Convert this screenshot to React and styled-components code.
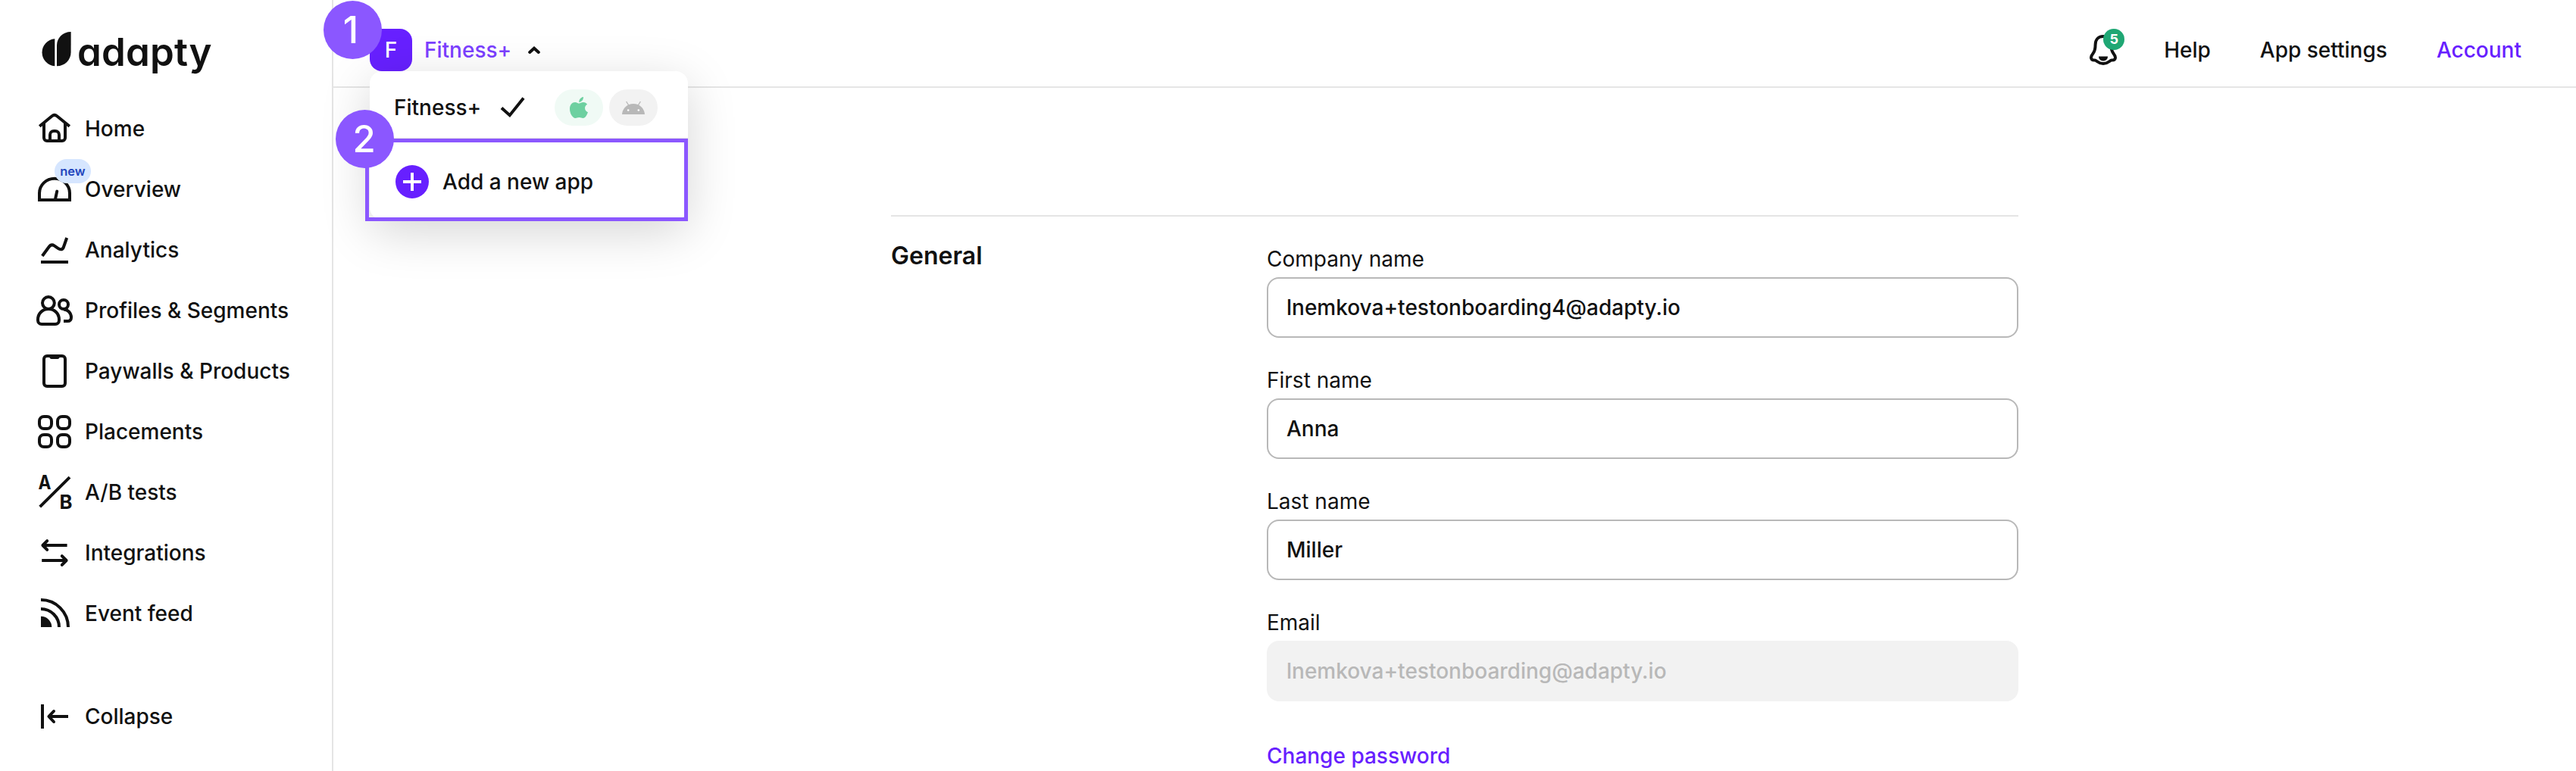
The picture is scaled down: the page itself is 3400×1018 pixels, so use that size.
import React from "react";
import styled, { createGlobalStyle } from "styled-components";

const GlobalStyle = createGlobalStyle`
  *, *::before, *::after { box-sizing: border-box; }
  html, body { margin: 0; padding: 0; background: #fff; }
  body { font-family: Inter, "Liberation Sans", sans-serif; font-size: 28px; line-height: 40px; color: #111; overflow: hidden; }
`;

const Page = styled.div`
  position: relative;
  display: flex;
  width: 3400px;
  height: 1018px;
  overflow: hidden;
`;

const Sidebar = styled.aside`
  width: 440px;
  flex: none;
  display: flex;
  flex-direction: column;
  border-right: 2px solid #e5e5e5;
`;

const Logo = styled.div`
  display: flex;
  align-items: flex-start;
  height: 130px;
  padding: 42px 0 0 54px;
`;

const LogoMark = styled.svg`
  width: 40px;
  height: 46px;
  flex: none;
`;

const LogoText = styled.span`
  margin: -1px 0 0 8px;
  font-size: 51px;
  line-height: 56px;
  font-weight: 600;
  letter-spacing: 0.2px;
  font-feature-settings: "cv11";
`;

const Nav = styled.nav`
  display: flex;
  flex-direction: column;
`;

const NavItem = styled.a`
  display: flex;
  align-items: center;
  gap: 16px;
  height: 80px;
  padding-left: 48px;
  font-weight: 500;
`;

const CollapseItem = styled(NavItem)`
  margin-top: 56px;
`;

const IconBox = styled.span`
  position: relative;
  display: flex;
  width: 48px;
  height: 48px;
`;

const Glyph = styled.svg`
  width: 48px;
  height: 48px;
  fill: none;
  stroke: #111;
  stroke-width: 4;
  overflow: visible;
`;

const GlyphLetter = styled.text`
  font-family: Inter, sans-serif;
  font-weight: 700;
  font-size: 26px;
  fill: #111;
  stroke: none;
`;

const NewBadge = styled.span`
  position: absolute;
  left: 24px;
  top: -16px;
  width: 48px;
  height: 32px;
  border-radius: 16px;
  background: #d6e6ff;
  color: #2346bd;
  font-size: 16.5px;
  line-height: 33px;
  font-weight: 600;
  text-align: center;
`;

const Main = styled.main`
  flex: 1;
  display: flex;
  flex-direction: column;
`;

const TopBar = styled.header`
  display: flex;
  align-items: center;
  justify-content: space-between;
  height: 116px;
  padding: 18px 72px 0 48px;
  border-bottom: 2px solid #e5e5e5;
  font-weight: 500;
`;

const AppSwitcher = styled.div`
  display: flex;
  align-items: center;
  color: #7b40ff;
`;

const AppAvatar = styled.span`
  width: 56px;
  height: 56px;
  margin-right: 16px;
  border-radius: 16px;
  background: #6720ff;
  color: #fff;
  line-height: 56px;
  text-align: center;
`;

const Chevron = styled.svg`
  width: 16px;
  height: 12px;
  margin-left: 22px;
  fill: none;
  stroke: #111;
  stroke-width: 4;
  stroke-linecap: round;
`;

const TopLinks = styled.div`
  display: flex;
  align-items: center;
`;

const TopLink = styled.a`
  margin-left: ${(p) => p.$gap || 65}px;
  color: ${(p) => (p.$active ? "#6720ff" : "#111")};
`;

const BellBox = styled.span`
  position: relative;
  display: flex;
  width: 48px;
  height: 48px;
`;

const CountBadge = styled.span`
  position: absolute;
  left: 24px;
  top: -4px;
  width: 28px;
  height: 28px;
  border-radius: 50%;
  background: #1fa774;
  color: #fff;
  font-size: 18px;
  line-height: 28px;
  font-weight: 700;
  text-align: center;
`;

const Content = styled.section`
  display: grid;
  grid-template-columns: 496px 992px;
  width: 1488px;
  margin: 168px 0 0 736px;
  border-top: 2px solid #e5e5e5;
`;

const SectionTitle = styled.h2`
  margin: 32px 0 0;
  font-size: 32px;
  line-height: 40px;
  font-weight: 600;
`;

const Form = styled.div`
  display: flex;
  flex-direction: column;
  padding-top: 36px;
`;

const Field = styled.label`
  display: flex;
  flex-direction: column;
  height: 160px;
`;

const FieldLabel = styled.span`
  height: 44px;
  line-height: 40px;
`;

const FieldInput = styled.span`
  height: 80px;
  padding-left: 24px;
  border: 2px solid ${(p) => (p.$disabled ? "#f2f2f2" : "#b8b8b8")};
  border-radius: 16px;
  background: ${(p) => (p.$disabled ? "#f2f2f2" : "#fff")};
  color: ${(p) => (p.$disabled ? "#b8b8b8" : "#111")};
  font-weight: 500;
  line-height: 76px;
`;

const TextLink = styled.a`
  margin-top: 16px;
  color: #6720ff;
  font-weight: 500;
`;

const Menu = styled.div`
  position: absolute;
  left: 488px;
  top: 94px;
  width: 420px;
  height: 196px;
  border-radius: 16px;
  background: #fff;
  box-shadow: 0 16px 64px rgba(0, 0, 0, 0.17);
  font-weight: 500;
`;

const MenuRow = styled.div`
  display: flex;
  align-items: center;
  height: 90px;
  padding: 8px 40px 0 32px;
  border-bottom: 2px solid #e5e5e5;
`;

const AddRow = styled.div`
  display: flex;
  align-items: center;
  height: 112px;
  padding-left: 34px;
  gap: 18px;
`;

const AddIcon = styled.svg`
  width: 44px;
  height: 44px;
`;

const CheckMark = styled.svg`
  width: 34px;
  height: 30px;
  margin-left: 25px;
  fill: none;
  stroke: #111;
  stroke-width: 4;
`;

const PlatformPill = styled.span`
  display: flex;
  align-items: center;
  justify-content: center;
  width: 64px;
  height: 48px;
  margin-left: ${(p) => (p.$first ? "auto" : "8px")};
  border-radius: 24px;
  background: ${(p) => (p.$first ? "#f0faf5" : "#f2f2f2")};
`;

const Highlight = styled.div`
  position: absolute;
  left: 482px;
  top: 183px;
  width: 426px;
  height: 109px;
  border: 5px solid #8b57ff;
`;

const StepMarker = styled.div`
  position: absolute;
  left: ${(p) => p.$x}px;
  top: ${(p) => p.$y}px;
  width: 77px;
  height: 77px;
  padding-right: ${(p) => p.$nudge}px;
  border-radius: 50%;
  background: #8b57ff;
  color: #fff;
  font-size: 49px;
  line-height: 78px;
  font-weight: 500;
  text-align: center;
`;

const icons = {
  home: (
    <>
      <path d="M4.2 20.8 L20.6 7.2 a5.2 5.2 0 0 1 6.6 0 L43.8 20.8" />
      <path d="M10 16V36a4 4 0 0 0 4 4h20a4 4 0 0 0 4-4V16" />
      <path d="M18 40V32a5 5 0 0 1 5-5h2a5 5 0 0 1 5 5v8" />
    </>
  ),
  overview: (
    <>
      <path d="M4 38V29C4 18.2 13 9.8 24 9.8S44 18.2 44 29V38Z" />
      <path d="M27.2 26.6L25.2 36" strokeLinecap="round" />
    </>
  ),
  analytics: (
    <>
      <path d="M7.8 32L16.6 20C18.5 17.4 21 16.7 23.6 18.4L28.6 21.9C32 24.3 34.8 23.6 36 20L40.2 8" />
      <path d="M6 40H42" />
    </>
  ),
  profiles: (
    <>
      <circle cx="15.9" cy="14" r="7.9" />
      <path d="M2 36C2 28 8 22 16 22S30 28 30 36V37A5 5 0 0 1 25 42H7A5 5 0 0 1 2 37Z" />
      <circle cx="36" cy="16" r="6" />
      <path d="M36 22.5C41.5 22.5 46 27.5 46 33.2C46 36.5 43.8 38 41 38H36" />
    </>
  ),
  paywalls: (
    <>
      <rect x="10" y="4" width="28" height="40" rx="4" />
      <path d="M17 5H31C30.4 7 29.6 8 28 8H20C18.4 8 17.6 7 17 5Z" fill="#111" stroke="none" />
    </>
  ),
  placements: (
    <>
      <rect x="4" y="4" width="16" height="16" rx="6" />
      <rect x="28" y="4" width="16" height="16" rx="6" />
      <rect x="4" y="28" width="16" height="16" rx="6" />
      <rect x="28" y="28" width="16" height="16" rx="6" />
    </>
  ),
  ab: (
    <>
      <path d="M4.7 43.2L44 4.2" />
      <GlyphLetter x="2.6" y="20" textLength="17" lengthAdjust="spacingAndGlyphs">A</GlyphLetter>
      <GlyphLetter x="30.6" y="46" textLength="17" lengthAdjust="spacingAndGlyphs">B</GlyphLetter>
    </>
  ),
  integrations: (
    <>
      <path d="M40.6 14H9M7.2 34H39" />
      <path d="M14.2 8.2L8.4 14L14.2 19.8M33.8 28.2L39.6 34L33.8 39.8" strokeLinecap="round" strokeLinejoin="round" />
    </>
  ),
  feed: (
    <>
      <path d="M6 6A36 36 0 0 1 42 42M6 18A24 24 0 0 1 30 42" />
      <path d="M6 27.7A14.3 14.3 0 0 1 20.3 42H6Z" fill="#111" stroke="none" />
    </>
  ),
  collapse: (
    <>
      <path d="M8 8V40M42 24H17" />
      <path d="M23 17L16.4 24L23 31" strokeLinecap="round" strokeLinejoin="round" />
    </>
  ),
  bell: (
    <>
      <path d="M24 6C17 6 13.6 11 13.6 17C13.6 23 13 25.5 10.6 28.5C8.6 31 8 32.5 8 34C8 36.5 10 37.6 13 37.6C15.5 37.6 17 42 24 42S32.5 37.6 35 37.6C38 37.6 40 36.5 40 34C40 32.5 39.4 31 37.4 28.5C35 25.5 34.4 23 34.4 17C34.4 11 31 6 24 6Z" />
      <path d="M18 32.5H30C30 36 27.5 38.4 24 38.4S18 36 18 32.5Z" fill="#111" stroke="none" />
    </>
  ),
};

const navItems = [
  { icon: "home", label: "Home" },
  { icon: "overview", label: "Overview", isNew: true },
  { icon: "analytics", label: "Analytics" },
  { icon: "profiles", label: "Profiles & Segments" },
  { icon: "paywalls", label: "Paywalls & Products" },
  { icon: "placements", label: "Placements" },
  { icon: "ab", label: "A/B tests" },
  { icon: "integrations", label: "Integrations" },
  { icon: "feed", label: "Event feed" },
];

const fields = [
  { label: "Company name", value: "lnemkova+testonboarding4@adapty.io" },
  { label: "First name", value: "Anna" },
  { label: "Last name", value: "Miller" },
  { label: "Email", value: "lnemkova+testonboarding@adapty.io", disabled: true },
];

function Icon({ name }) {
  return <Glyph viewBox="0 0 48 48">{icons[name]}</Glyph>;
}

export default function App() {
  return (
    <>
      <GlobalStyle />
      <Page>
        <Sidebar>
          <Logo>
            <LogoMark viewBox="0 0 40 46">
              <path d="M18.3 9.2V45.3A18.1 18.1 0 0 1 18.3 9.2Z" fill="#111" />
              <path d="M21 45.3V18C21 8 29 0 39.6 0V27C39.6 37 31.5 45.3 21 45.3Z" fill="#111" />
            </LogoMark>
            <LogoText>adapty</LogoText>
          </Logo>
          <Nav>
            {navItems.map((item) => (
              <NavItem key={item.label}>
                <IconBox>
                  <Icon name={item.icon} />
                  {item.isNew && <NewBadge>new</NewBadge>}
                </IconBox>
                {item.label}
              </NavItem>
            ))}
            <CollapseItem>
              <IconBox>
                <Icon name="collapse" />
              </IconBox>
              Collapse
            </CollapseItem>
          </Nav>
        </Sidebar>
        <Main>
          <TopBar>
            <AppSwitcher>
              <AppAvatar>F</AppAvatar>
              Fitness+
              <Chevron viewBox="0 0 16 12">
                <path d="M2.2 9L8 3.8L13.8 9" />
              </Chevron>
            </AppSwitcher>
            <TopLinks>
              <BellBox>
                <Icon name="bell" />
                <CountBadge>5</CountBadge>
              </BellBox>
              <TopLink $gap={56}>Help</TopLink>
              <TopLink>App settings</TopLink>
              <TopLink $active>Account</TopLink>
            </TopLinks>
          </TopBar>
          <Content>
            <SectionTitle>General</SectionTitle>
            <Form>
              {fields.map((f) => (
                <Field key={f.label}>
                  <FieldLabel>{f.label}</FieldLabel>
                  <FieldInput $disabled={f.disabled}>{f.value}</FieldInput>
                </Field>
              ))}
              <TextLink>Change password</TextLink>
            </Form>
          </Content>
        </Main>
        <Menu>
          <MenuRow>
            Fitness+
            <CheckMark viewBox="0 0 34 30">
              <path d="M2 15.4L12.8 25.2L31 2.4" />
            </CheckMark>
            <PlatformPill $first>
              <svg width="24" height="28" viewBox="0 0 24 28" fill="#6dd0a0">
                <path d="M12 8.6C14 8.6 15.2 7 18 7C20.2 7 22 8.2 23.1 9.8C18.6 12.4 19.2 18.4 24 20.2C22.6 23.8 20.6 28 17.6 28C15.6 28 14.8 27 12.5 27C10.2 27 9.4 28 7.4 28C3.6 28 0 21.6 0 15.8C0 10.4 3.4 7.1 7 7.1C9.2 7.1 10.6 8.6 12 8.6Z" />
                <path d="M12.2 6.9C12.2 3.2 14.6 0.5 18 0C18.2 3.6 15.6 6.8 12.2 6.9Z" />
              </svg>
            </PlatformPill>
            <PlatformPill>
              <svg width="30" height="18" viewBox="0 0 30 18">
                <path d="M0 18C0.5 10 7 4 15 4S29.5 10 30 18Z" fill="#b8b8b8" />
                <path d="M5.6 1L8.8 6.2M24.4 1L21.2 6.2" stroke="#b8b8b8" strokeWidth="1.3" />
                <circle cx="8.2" cy="12.5" r="1.3" fill="#fff" />
                <circle cx="21.8" cy="12.5" r="1.3" fill="#fff" />
              </svg>
            </PlatformPill>
          </MenuRow>
          <AddRow>
            <AddIcon viewBox="0 0 44 44">
              <circle cx="22" cy="22" r="22" fill="#6720ff" />
              <path d="M10 22H34M22 10V34" stroke="#fff" strokeWidth="4" />
            </AddIcon>
            Add a new app
          </AddRow>
        </Menu>
        <Highlight />
        <StepMarker $x={427} $y={1} $nudge={5}>1</StepMarker>
        <StepMarker $x={443} $y={145} $nudge={2}>2</StepMarker>
      </Page>
    </>
  );
}
